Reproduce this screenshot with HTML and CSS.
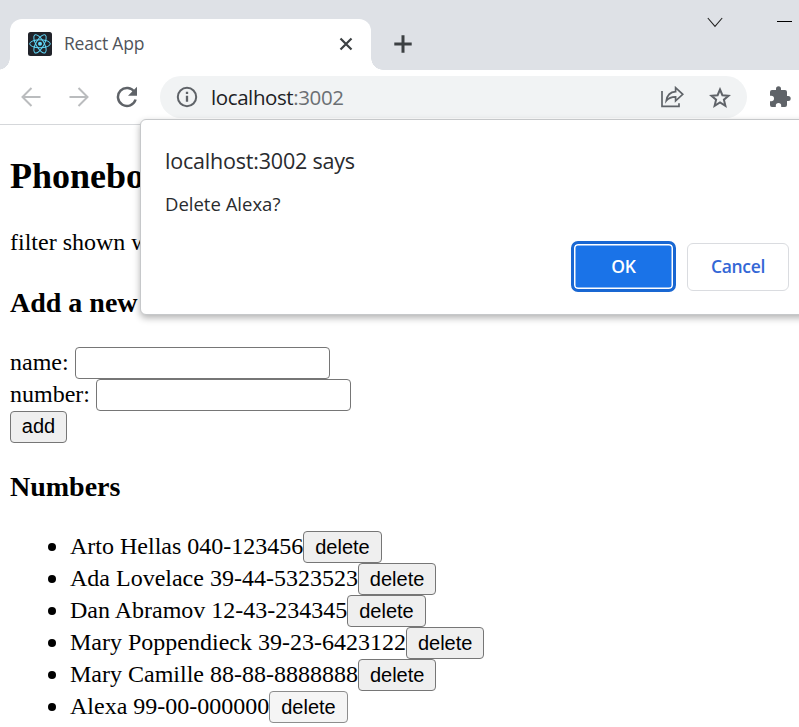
FILE: index.html
```html
<!DOCTYPE html>
<html lang="en">
<head>
<meta charset="utf-8">
<title>React App</title>
<link rel="stylesheet" href="styles.css">
</head>
<body>
<div class="tabstrip">
  <div class="tab">
    <svg class="favicon" width="24" height="24" viewBox="0 0 24 24"><rect width="24" height="24" rx="2.5" fill="#20232a"/><g fill="none" stroke="#61dafb" stroke-width="1"><ellipse cx="12" cy="11.8" rx="10.3" ry="4"/><ellipse cx="12" cy="11.8" rx="10.3" ry="4" transform="rotate(60 12 11.8)"/><ellipse cx="12" cy="11.8" rx="10.3" ry="4" transform="rotate(120 12 11.8)"/></g><circle cx="12" cy="11.8" r="2" fill="#61dafb"/></svg>
    <span class="tab-title">React App</span>
    <svg class="tab-close" width="14" height="14" viewBox="0 0 14 14"><path d="M1.5 1.5l11 11M12.5 1.5l-11 11" stroke="#3c4043" stroke-width="2.2"/></svg>
  </div>
  <svg class="new-tab" width="18" height="18" viewBox="0 0 18 18"><path d="M9 0.3v17.4M.3 9h17.4" stroke="#3c4043" stroke-width="3"/></svg>
  <svg class="chevron" width="16" height="11" viewBox="0 0 16 11"><path d="M.8 1L8 9.3 15.2 1" fill="none" stroke="#222" stroke-width="1.1"/></svg>
  <span class="minimize"></span>
</div>
<div class="toolbar">
  <svg class="nav" width="20" height="20" viewBox="0 0 20 20"><path d="M19.5 10H1.5M10.5 1L1.5 10l9 9" fill="none" stroke="#babcbe" stroke-width="2"/></svg>
  <svg class="nav" width="20" height="20" viewBox="0 0 20 20"><path d="M.5 10h18M9.500 1l9 9-9 9" fill="none" stroke="#babcbe" stroke-width="2"/></svg>
  <svg class="nav reload" width="22" height="22" viewBox="0 0 22 22"><path d="M18.600 6.200A9 9 0 1 0 19.600 13.500" fill="none" stroke="#5f6368" stroke-width="2.500"/><path d="M21 .8v9h-9z" fill="#5f6368"/></svg>
  <div class="omnibox">
    <svg width="22" height="22" viewBox="0 0 22 22"><circle cx="11" cy="11" r="9.200" fill="none" stroke="#5f6368" stroke-width="2"/><path d="M11 9.700v6M11 5.700v2.300" stroke="#5f6368" stroke-width="2.300"/></svg>
    <span class="url">localhost<span class="port">:3002</span></span>
    <svg class="share" width="23" height="22" viewBox="0 0 23 22"><path d="M1 5v15.300h17v-3" fill="none" stroke="#5f6368" stroke-width="1.700"/><path d="M5.300 14.800C6 9.500 9 6 14.600 5.600V1.700l7.200 6.600-7.200 6.500v-3.900c-4.200 0-7 1-9.300 3.900z" fill="none" stroke="#5f6368" stroke-width="1.700"/></svg>
    <svg class="star" width="22" height="21" viewBox="0 0 22 21"><path d="M11 2.500l2.400 5.700 6.200.5-4.700 4 1.500 6.100-5.400-3.300-5.400 3.300 1.500-6.100-4.700-4 6.200-.5z" fill="none" stroke="#5f6368" stroke-width="2"/></svg>
  </div>
  <svg class="puzzle" width="22" height="22" viewBox="0 0 22 22"><path d="M19.200 10H18V6a2 2 0 0 0-2-2h-4V2.700a2.500 2.500 0 0 0-5 0V4H3a2 2 0 0 0-2 2v3.800h1.300a2.700 2.700 0 0 1 0 5.400H1V19a2 2 0 0 0 2 2h3.800v-1.300a2.700 2.700 0 0 1 5.400 0V21H16a2 2 0 0 0 2-2v-4h1.200a2.500 2.500 0 0 0 0-5z" fill="#5f6368"/></svg>
</div>
<main class="page">
  <h2>Phonebook</h2>
  <div class="filter">filter shown with</div>
  <h3>Add a new</h3>
  <form>
    <div class="row"><label for="name">name:</label><input id="name"></div>
    <div class="row"><label for="number">number:</label><input id="number"></div>
    <div class="row"><button class="add" type="button">add</button></div>
  </form>
  <h3 class="numbers">Numbers</h3>
  <ul>
    <li><span>Arto Hellas 040-123456</span><button>delete</button></li>
    <li><span>Ada Lovelace 39-44-5323523</span><button>delete</button></li>
    <li><span>Dan Abramov 12-43-234345</span><button>delete</button></li>
    <li><span>Mary Poppendieck 39-23-6423122</span><button>delete</button></li>
    <li><span>Mary Camille 88-88-8888888</span><button>delete</button></li>
    <li><span>Alexa 99-00-000000</span><button class="pressed">delete</button></li>
  </ul>
</main>
<div class="dialog">
  <div class="dialog-title">localhost:3002 says</div>
  <div class="dialog-text">Delete Alexa?</div>
  <div class="actions"><button class="ok">OK</button><button class="cancel">Cancel</button></div>
</div>
</body>
</html>
```
FILE: styles.css
```css
* { box-sizing: border-box; }
body { margin: 0; width: 799px; height: 727px; overflow: hidden; position: relative; background: #fff; color: #000; font: 24px "Liberation Serif", serif; }
svg { display: block; flex: none; }
.tabstrip { height: 70px; background: #dee1e6; display: flex; align-items: flex-start; padding-left: 10px; }
.tab { position: relative; width: 361px; height: 51px; margin-top: 19px; padding: 0 18px; background: #fff; border-radius: 12px 12px 0 0; display: flex; align-items: center; font: 17.500px "Open Sans", sans-serif; color: #50545a; }
.tab::before, .tab::after { content: ""; position: absolute; bottom: 0; width: 12px; height: 12px; }
.tab::before { left: -12px; background: radial-gradient(circle at 0 0, transparent 11.500px, #fff 12px); }
.tab::after { right: -12px; background: radial-gradient(circle at 100% 0, transparent 11.500px, #fff 12px); }
.favicon { margin-top: -2px; }
.tab-title { margin: -3px 0 0 12px; letter-spacing: -.2px; }
.tab-close { margin: -2px 0 0 auto; }
.new-tab { margin: 35px 0 0 23px; }
.chevron { margin: 17px 0 0 295px; }
.minimize { width: 15px; height: 1px; background: #000; margin: 21px 0 0 54px; }
.toolbar { height: 55px; border-bottom: 1px solid #d5d7da; display: flex; align-items: center; padding-left: 21px; }
.nav { margin-right: 28px; }
.nav.reload { margin: 0 22px 0 -1px; }
.omnibox { flex: none; width: 587px; height: 42px; border-radius: 21px; background: #f1f3f4; padding: 0 16px; display: flex; align-items: center; }
.url { margin-left: 13px; font: 20.500px "Open Sans", sans-serif; letter-spacing: -.4px; color: #202124; }
.port { color: #6b6f73; }
.share { margin-left: auto; }
.star { margin-left: 25px; }
.puzzle { margin-left: 22px; }
.page { padding: 31px 10px 0; }
h2 { margin: 0; font-size: 36px; line-height: 40px; }
.filter { margin-top: 32px; line-height: 28px; }
h3 { margin: 31px 0 0; font-size: 28px; line-height: 32px; }
.row { display: flex; height: 32px; line-height: 30px; }
form { margin-top: 28px; }
input { width: 255px; height: 32px; border: 1px solid #767676; border-radius: 4px; margin: 0 0 0 6px; background: #fff; }
.page button { width: 78.400px; height: 32px; padding: 0; border: 1px solid #767676; border-radius: 4px; background: #efefef; color: #000; font: 20px "Liberation Sans", sans-serif; line-height: 29px; }
.page .add { width: 57px; padding-bottom: 2px; }
.page .pressed { background: #f5f5f5; border-color: #8d8d8d; }
.numbers { margin-top: 28px; }
ul { margin: 28px 0 0; padding: 0 0 0 60px; list-style: none; }
li { height: 32px; line-height: 30px; display: flex; }
li::before { content: ""; width: 8px; height: 8px; border-radius: 50%; background: #000; margin: 12px 14px 0 -22px; }
.dialog { position: absolute; left: 140px; top: 119px; width: 680px; height: 196px; padding: 26px 30px 0 24px; background: #fff; border: 1px solid #c6c8ca; border-radius: 6px; box-shadow: 0 3px 7px rgba(0,0,0,.3); font-family: "Open Sans", sans-serif; color: #292b2e; }
.dialog-title { font-size: 21.500px; line-height: 30px; letter-spacing: -.2px; }
.dialog-text { margin-top: 15px; font-size: 18.500px; line-height: 26px; letter-spacing: 0; }
.actions { display: flex; justify-content: flex-end; align-items: center; margin-top: 24px; gap: 11px; }
.dialog button { height: 48px; width: 102px; padding: 0 0 2px; border-radius: 6px; font: 600 17.500px "Open Sans", sans-serif; letter-spacing: -.3px; }
.dialog .ok { width: 105px; height: 51px; border: 3px solid #1967d2; border-radius: 7px; background: #1a73e8; color: #fff; box-shadow: inset 0 0 0 1.500px #fff; }
.dialog .cancel { background: #fff; border: 1px solid #dadce0; color: #3367d6; }
```
